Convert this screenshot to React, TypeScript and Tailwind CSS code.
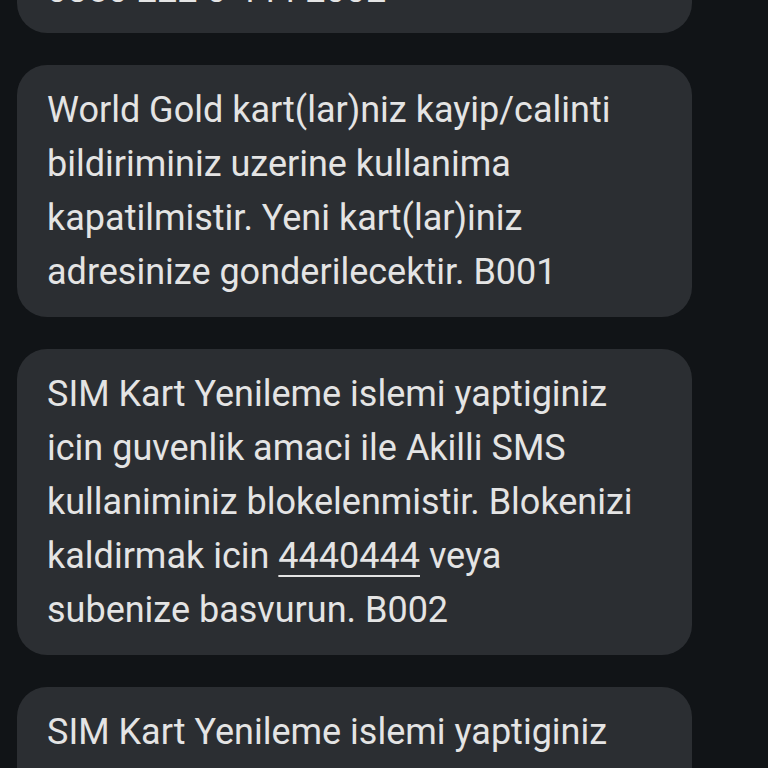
export default function App() {
  const bubble =
    "w-[675px] rounded-[30px] bg-[#2b2e32] px-[30px] text-[36px] leading-[54px] text-[#e4e4e4]";

  return (
    <div
      className="h-[768px] overflow-hidden bg-[#111417] pl-[17px]"
      style={{ fontFamily: "Roboto, 'Noto Sans', sans-serif" }}
    >
      <div className="-mt-[111px] flex flex-col gap-[32px]">
        {/* previous message, scrolled mostly out of view */}
        <div className={`${bubble} pt-[20px] pb-[16px]`}>
          <p>bilgi icin 0850 222 2002</p>
          <p>0850 222 0 444 2002</p>
        </div>

        <div className={`${bubble} py-[18px]`}>
          <p>World Gold kart(lar)niz kayip/calinti</p>
          <p>bildiriminiz uzerine kullanima</p>
          <p>kapatilmistir. Yeni kart(lar)iniz</p>
          <p>adresinize gonderilecektir. B001</p>
        </div>

        <div className={`${bubble} py-[18px]`}>
          <p>SIM Kart Yenileme islemi yaptiginiz</p>
          <p>icin guvenlik amaci ile Akilli SMS</p>
          <p>kullaniminiz blokelenmistir. Blokenizi</p>
          <p>
            kaldirmak icin{" "}
            <span className="underline decoration-2 underline-offset-[7px]">4440444</span> veya
          </p>
          <p>subenize basvurun. B002</p>
        </div>

        <div className={`${bubble} py-[18px]`}>
          <p>SIM Kart Yenileme islemi yaptiginiz</p>
          <p>icin guvenlik amaci ile Akilli SMS</p>
        </div>
      </div>
    </div>
  );
}
